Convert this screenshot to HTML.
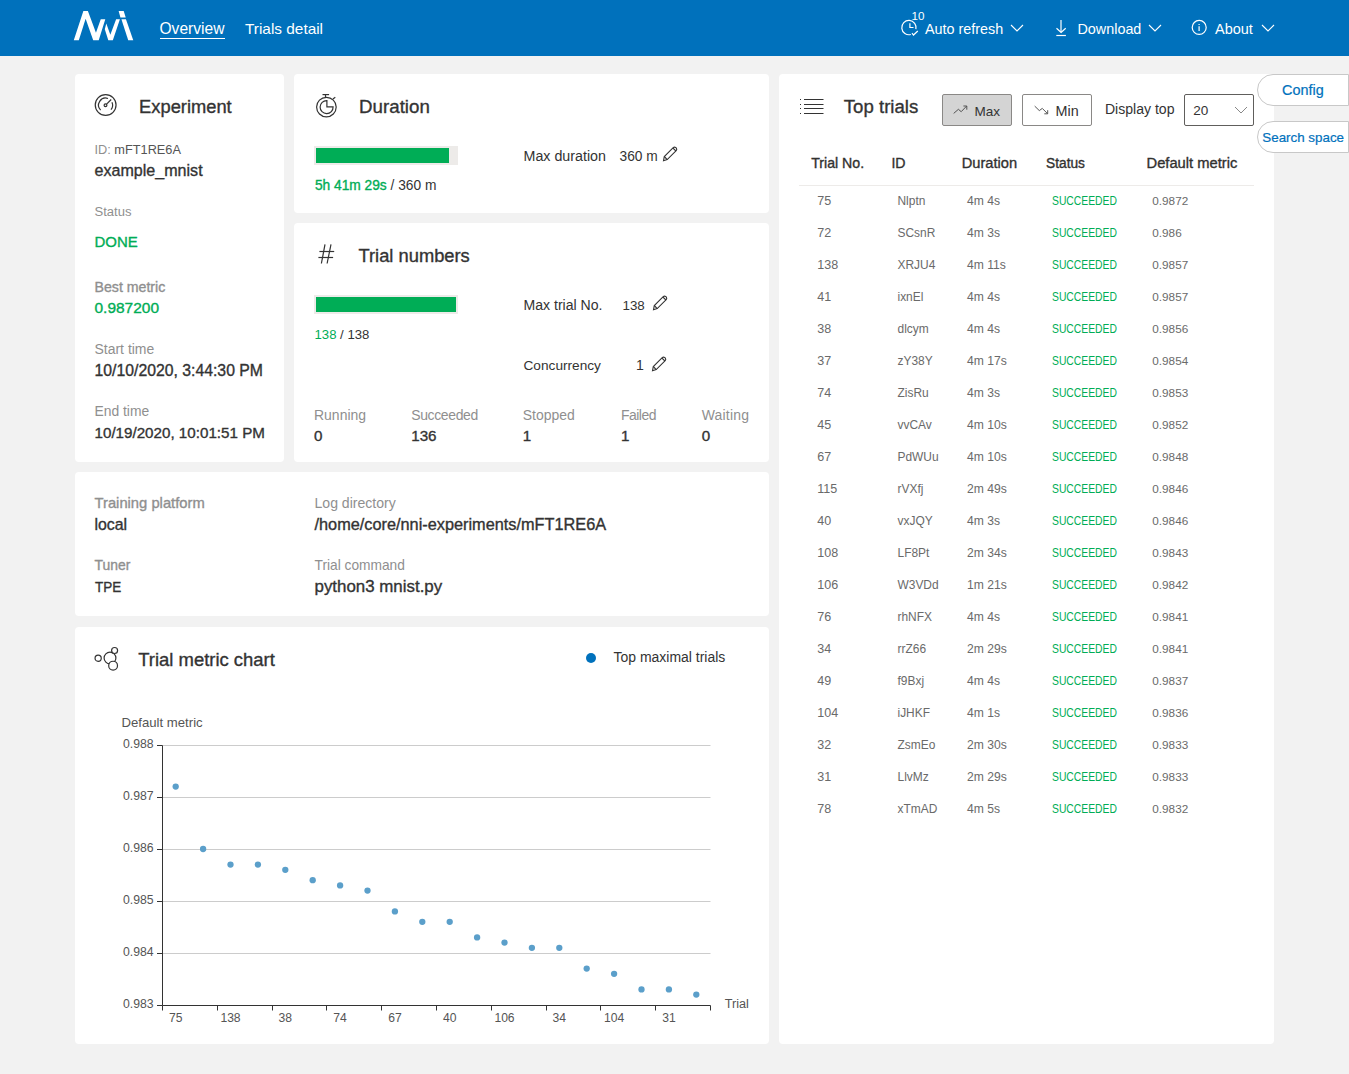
<!DOCTYPE html>
<html><head><meta charset="utf-8"><style>
html,body{margin:0;padding:0;}
body{width:1349px;height:1074px;position:relative;overflow:hidden;background:#f2f2f2;font-family:"Liberation Sans",sans-serif;}
.t{position:absolute;white-space:nowrap;}
svg{overflow:visible}
</style></head><body>
<div style="position:absolute;left:0px;top:0px;width:1349px;height:56px;background:#0071bc"></div>
<svg style="position:absolute;left:70px;top:8px" width="68" height="36" viewBox="0 0 1349 714"><g fill="#fff"><polygon points="75,640 265,60 355,60 515,490 610,225 700,225 570,640 460,640 310,215 175,640"/><polygon points="690,420 720,305 800,530 915,225 990,225 850,640 760,640"/><polygon points="965,60 1065,60 1105,190 1000,190"/><polygon points="1020,225 1110,225 1255,640 1155,640"/></g></svg>
<div class="t" style="left:159.5px;top:21px;font-size:15.58px;line-height:15.58px;color:#fff;">Overview</div>
<div style="position:absolute;left:160px;top:38px;width:65px;height:1px;background:#fff"></div>
<div class="t" style="left:245.0px;top:21px;font-size:15.38px;line-height:15.38px;color:#fff;">Trials detail</div>
<svg style="position:absolute;left:898px;top:6px" width="32" height="32" viewBox="0 0 32 32" fill="none" stroke="#fff" stroke-width="1.2"><path d="M12.8 28.5 A7.15 7.15 0 1 1 17.9 23.2"/><path d="M11.9 17.3 V21.5 H15.5"/><path d="M14 27.1 L15.5 29 L19.8 25"/></svg>
<div class="t" style="left:911.5px;top:10px;font-size:11.64px;line-height:11.64px;color:#fff;">10</div>
<div class="t" style="left:925.0px;top:22px;font-size:14.37px;line-height:14.37px;color:#fff;">Auto refresh</div>
<svg style="position:absolute;left:1008px;top:20px" width="18" height="14" viewBox="0 0 18 14" fill="none" stroke="#fff" stroke-width="1.1"><path d="M3 5 L9 11 L15 5"/></svg>
<svg style="position:absolute;left:1050px;top:14px" width="24" height="24" viewBox="0 0 24 24" fill="none" stroke="#fff" stroke-width="1.2"><path d="M11 6 V18.3"/><path d="M6.5 14.3 L11.1 18.5 L15.7 14.3"/><path d="M6.3 21.5 H15.9"/></svg>
<div class="t" style="left:1077.5px;top:22px;font-size:14.37px;line-height:14.37px;color:#fff;">Download</div>
<svg style="position:absolute;left:1146px;top:20px" width="18" height="14" viewBox="0 0 18 14" fill="none" stroke="#fff" stroke-width="1.1"><path d="M3 5 L9 11 L15 5"/></svg>
<svg style="position:absolute;left:1186px;top:14px" width="26" height="26" viewBox="0 0 26 26" fill="none" stroke="#fff" stroke-width="1.2"><circle cx="13.2" cy="13.45" r="7"/><path d="M13.1 12.3 V16.9"/><path d="M13.1 10 V11" /></svg>
<div class="t" style="left:1215.0px;top:22px;font-size:14.47px;line-height:14.47px;color:#fff;">About</div>
<svg style="position:absolute;left:1259px;top:20px" width="18" height="14" viewBox="0 0 18 14" fill="none" stroke="#fff" stroke-width="1.1"><path d="M3 5 L9 11 L15 5"/></svg>
<div style="position:absolute;left:75px;top:74px;width:209px;height:388px;background:#fff;border-radius:4px"></div>
<div style="position:absolute;left:294px;top:74px;width:475px;height:139px;background:#fff;border-radius:4px"></div>
<div style="position:absolute;left:294px;top:223px;width:475px;height:239px;background:#fff;border-radius:4px"></div>
<div style="position:absolute;left:75px;top:472px;width:694px;height:144px;background:#fff;border-radius:4px"></div>
<div style="position:absolute;left:75px;top:627px;width:694px;height:417px;background:#fff;border-radius:4px"></div>
<div style="position:absolute;left:779px;top:74px;width:495px;height:970px;background:#fff;border-radius:4px"></div>
<svg style="position:absolute;left:90px;top:90px" width="32" height="32" viewBox="0 0 32 32" fill="none" stroke="#333" stroke-width="1.2"><circle cx="15.65" cy="15.05" r="10.4"/><path d="M10.65 20.05 A7 7 0 0 1 17.99 8.52"/><path d="M21.94 12.14 A7 7 0 0 1 20.96 19.6"/><path d="M16.6 14.1 L21.2 9.5"/><circle cx="15.5" cy="15.2" r="1.4"/></svg>
<div class="t" style="left:139.1px;top:98px;font-size:18.32px;line-height:18.32px;color:#333;-webkit-text-stroke:0.35px #333;">Experiment</div>
<div class="t" style="left:94.5px;top:144px;font-size:12.75px;line-height:12.75px;color:#8f8f8f;">ID: <span style="color:#555">mFT1RE6A</span></div>
<div class="t" style="left:94.5px;top:162px;font-size:16.09px;line-height:16.09px;color:#333;-webkit-text-stroke:0.35px #333;">example_mnist</div>
<div class="t" style="left:94.5px;top:205px;font-size:13.05px;line-height:13.05px;color:#8f8f8f;">Status</div>
<div class="t" style="left:94.5px;top:234px;font-size:14.98px;line-height:14.98px;color:#00ad56;-webkit-text-stroke:0.35px #00ad56;">DONE</div>
<div class="t" style="left:94.5px;top:280px;font-size:14.17px;line-height:14.17px;color:#8f8f8f;-webkit-text-stroke:0.35px #8f8f8f;">Best metric</div>
<div class="t" style="left:94.5px;top:300px;font-size:15.48px;line-height:15.48px;color:#00ad56;-webkit-text-stroke:0.35px #00ad56;">0.987200</div>
<div class="t" style="left:94.5px;top:343px;font-size:13.97px;line-height:13.97px;color:#8f8f8f;">Start time</div>
<div class="t" style="left:94.5px;top:363px;font-size:15.79px;line-height:15.79px;color:#333;-webkit-text-stroke:0.35px #333;">10/10/2020, 3:44:30 PM</div>
<div class="t" style="left:94.5px;top:405px;font-size:13.86px;line-height:13.86px;color:#8f8f8f;">End time</div>
<div class="t" style="left:94.5px;top:425px;font-size:15.18px;line-height:15.18px;color:#333;-webkit-text-stroke:0.35px #333;">10/19/2020, 10:01:51 PM</div>
<svg style="position:absolute;left:310px;top:90px" width="32" height="32" viewBox="0 0 32 32" fill="none" stroke="#333" stroke-width="1.2"><circle cx="16.4" cy="17.1" r="9.8"/><path d="M15.5 4.8 V7.2"/><path d="M12.5 4.6 H19.1"/><path d="M22.9 8.9 L25.3 7.2"/><path d="M16.9 10.6 A6.5 6.5 0 1 0 23.1 16.8 H16.9 Z"/></svg>
<div class="t" style="left:359.1px;top:98px;font-size:18.72px;line-height:18.72px;color:#333;-webkit-text-stroke:0.35px #333;">Duration</div>
<div style="position:absolute;left:314px;top:146px;width:144px;height:19px;background:#edebe9"></div>
<div style="position:absolute;left:316px;top:148px;width:133px;height:15px;background:#00ad56"></div>
<div class="t" style="left:314.9px;top:179px;font-size:13.76px;line-height:13.76px;color:#333;"><span style="color:#00ad56;-webkit-text-stroke:0.35px #00ad56">5h 41m 29s</span> / 360 m</div>
<div class="t" style="left:523.5px;top:149px;font-size:14.27px;line-height:14.27px;color:#333;">Max duration</div>
<div class="t" style="left:619.5px;top:150px;font-size:13.76px;line-height:13.76px;color:#333;">360 m</div>
<svg style="position:absolute;left:660px;top:144px" width="20" height="20" viewBox="0 0 20 20" fill="none" stroke="#333" stroke-width="1.1"><path d="M3.5 16.8 L4.3 12.5 L13.2 3.6 Q14.5 2.6 15.8 3.6 L16.4 4.2 Q17.2 5.5 16.2 6.6 L7.2 15.6 Z"/><path d="M4.3 12.5 L7.2 15.6"/><path d="M13 4.1 L15.9 7"/></svg>
<svg style="position:absolute;left:312px;top:240px" width="28" height="28" viewBox="0 0 28 28" fill="none" stroke="#333" stroke-width="1.2"><path d="M13 4.4 L9.4 23.5"/><path d="M19 4.4 L15.1 23.5"/><path d="M7.4 11.5 H22.2"/><path d="M6.4 17.5 H21.1"/></svg>
<div class="t" style="left:358.5px;top:247px;font-size:18.32px;line-height:18.32px;color:#333;-webkit-text-stroke:0.35px #333;">Trial numbers</div>
<div style="position:absolute;left:314px;top:295px;width:144px;height:19px;background:#edebe9"></div>
<div style="position:absolute;left:316px;top:297px;width:140px;height:15px;background:#00ad56"></div>
<div class="t" style="left:314.5px;top:328px;font-size:13.16px;line-height:13.16px;color:#333;"><span style="color:#00ad56">138</span> / 138</div>
<div class="t" style="left:523.5px;top:298px;font-size:14.07px;line-height:14.07px;color:#333;">Max trial No.</div>
<div class="t" style="left:622.5px;top:299px;font-size:13.36px;line-height:13.36px;color:#333;">138</div>
<svg style="position:absolute;left:650px;top:293px" width="20" height="20" viewBox="0 0 20 20" fill="none" stroke="#333" stroke-width="1.1"><path d="M3.5 16.8 L4.3 12.5 L13.2 3.6 Q14.5 2.6 15.8 3.6 L16.4 4.2 Q17.2 5.5 16.2 6.6 L7.2 15.6 Z"/><path d="M4.3 12.5 L7.2 15.6"/><path d="M13 4.1 L15.9 7"/></svg>
<div class="t" style="left:523.5px;top:359px;font-size:13.66px;line-height:13.66px;color:#333;">Concurrency</div>
<div class="t" style="left:636.0px;top:358px;font-size:14.07px;line-height:14.07px;color:#333;">1</div>
<svg style="position:absolute;left:649px;top:354px" width="20" height="20" viewBox="0 0 20 20" fill="none" stroke="#333" stroke-width="1.1"><path d="M3.5 16.8 L4.3 12.5 L13.2 3.6 Q14.5 2.6 15.8 3.6 L16.4 4.2 Q17.2 5.5 16.2 6.6 L7.2 15.6 Z"/><path d="M4.3 12.5 L7.2 15.6"/><path d="M13 4.1 L15.9 7"/></svg>
<div class="t" style="left:314.0px;top:409px;font-size:13.97px;line-height:13.97px;color:#8f8f8f;letter-spacing:0px;">Running</div>
<div class="t" style="left:314.0px;top:428px;font-size:15.18px;line-height:15.18px;color:#333;-webkit-text-stroke:0.35px #333;">0</div>
<div class="t" style="left:411.2px;top:409px;font-size:13.97px;line-height:13.97px;color:#8f8f8f;letter-spacing:-0.35px;">Succeeded</div>
<div class="t" style="left:411.2px;top:428px;font-size:15.18px;line-height:15.18px;color:#333;-webkit-text-stroke:0.35px #333;">136</div>
<div class="t" style="left:522.7px;top:409px;font-size:13.97px;line-height:13.97px;color:#8f8f8f;letter-spacing:0px;">Stopped</div>
<div class="t" style="left:522.7px;top:428px;font-size:15.18px;line-height:15.18px;color:#333;-webkit-text-stroke:0.35px #333;">1</div>
<div class="t" style="left:620.9px;top:409px;font-size:13.97px;line-height:13.97px;color:#8f8f8f;letter-spacing:-0.5px;">Failed</div>
<div class="t" style="left:620.9px;top:428px;font-size:15.18px;line-height:15.18px;color:#333;-webkit-text-stroke:0.35px #333;">1</div>
<div class="t" style="left:701.7px;top:409px;font-size:13.97px;line-height:13.97px;color:#8f8f8f;letter-spacing:0.2px;">Waiting</div>
<div class="t" style="left:701.7px;top:428px;font-size:15.18px;line-height:15.18px;color:#333;-webkit-text-stroke:0.35px #333;">0</div>
<div class="t" style="left:94.5px;top:496px;font-size:14.78px;line-height:14.78px;color:#8f8f8f;-webkit-text-stroke:0.35px #8f8f8f;">Training platform</div>
<div class="t" style="left:94.5px;top:517px;font-size:15.89px;line-height:15.89px;color:#333;-webkit-text-stroke:0.35px #333;">local</div>
<div class="t" style="left:94.5px;top:559px;font-size:13.92px;line-height:13.92px;color:#8f8f8f;-webkit-text-stroke:0.35px #8f8f8f;">Tuner</div>
<div class="t" style="left:94.5px;top:579px;font-size:15.18px;line-height:15.18px;color:#333;-webkit-text-stroke:0.35px #333;transform:scaleX(0.89);transform-origin:0 0;">TPE</div>
<div class="t" style="left:314.5px;top:496px;font-size:14.07px;line-height:14.07px;color:#8f8f8f;">Log directory</div>
<div class="t" style="left:314.5px;top:516px;font-size:16.31px;line-height:16.31px;color:#333;-webkit-text-stroke:0.35px #333;">/home/core/nni-experiments/mFT1RE6A</div>
<div class="t" style="left:314.5px;top:559px;font-size:13.76px;line-height:13.76px;color:#8f8f8f;">Trial command</div>
<div class="t" style="left:314.5px;top:579px;font-size:16.9px;line-height:16.9px;color:#333;-webkit-text-stroke:0.35px #333;">python3 mnist.py</div>
<svg style="position:absolute;left:92px;top:644px" width="30" height="30" viewBox="0 0 30 30" fill="none" stroke="#333" stroke-width="1.2"><circle cx="6.15" cy="14.2" r="3.1"/><circle cx="18" cy="14" r="5.9"/><circle cx="22.6" cy="6.5" r="3.0" fill="#fff"/><circle cx="21.1" cy="21.65" r="4.4" fill="#fff"/></svg>
<div class="t" style="left:138.2px;top:651px;font-size:18.47px;line-height:18.47px;color:#333;-webkit-text-stroke:0.35px #333;">Trial metric chart</div>
<div style="position:absolute;left:586px;top:653px;width:10px;height:10px;background:#0071bc;border-radius:50%"></div>
<div class="t" style="left:613.5px;top:651px;font-size:13.97px;line-height:13.97px;color:#333;">Top maximal trials</div>
<svg style="position:absolute;left:0;top:0" width="1349" height="1074" viewBox="0 0 1349 1074"><line x1="162.5" y1="953.5" x2="710.5" y2="953.5" stroke="#ccc" stroke-width="1"/><line x1="162.5" y1="901.5" x2="710.5" y2="901.5" stroke="#ccc" stroke-width="1"/><line x1="162.5" y1="849.5" x2="710.5" y2="849.5" stroke="#ccc" stroke-width="1"/><line x1="162.5" y1="797.5" x2="710.5" y2="797.5" stroke="#ccc" stroke-width="1"/><line x1="162.5" y1="745.5" x2="710.5" y2="745.5" stroke="#ccc" stroke-width="1"/><line x1="157" y1="1005.5" x2="162.5" y2="1005.5" stroke="#333" stroke-width="1"/><line x1="157" y1="953.5" x2="162.5" y2="953.5" stroke="#333" stroke-width="1"/><line x1="157" y1="901.5" x2="162.5" y2="901.5" stroke="#333" stroke-width="1"/><line x1="157" y1="849.5" x2="162.5" y2="849.5" stroke="#333" stroke-width="1"/><line x1="157" y1="797.5" x2="162.5" y2="797.5" stroke="#333" stroke-width="1"/><line x1="157" y1="745.5" x2="162.5" y2="745.5" stroke="#333" stroke-width="1"/><line x1="162.5" y1="745.5" x2="162.5" y2="1005.5" stroke="#333" stroke-width="1"/><line x1="162.5" y1="1005.5" x2="710.5" y2="1005.5" stroke="#333" stroke-width="1"/><line x1="162.5" y1="1005.5" x2="162.5" y2="1010.5" stroke="#333" stroke-width="1"/><line x1="217.5" y1="1005.5" x2="217.5" y2="1010.5" stroke="#333" stroke-width="1"/><line x1="272.5" y1="1005.5" x2="272.5" y2="1010.5" stroke="#333" stroke-width="1"/><line x1="326.5" y1="1005.5" x2="326.5" y2="1010.5" stroke="#333" stroke-width="1"/><line x1="381.5" y1="1005.5" x2="381.5" y2="1010.5" stroke="#333" stroke-width="1"/><line x1="436.5" y1="1005.5" x2="436.5" y2="1010.5" stroke="#333" stroke-width="1"/><line x1="491.5" y1="1005.5" x2="491.5" y2="1010.5" stroke="#333" stroke-width="1"/><line x1="546.5" y1="1005.5" x2="546.5" y2="1010.5" stroke="#333" stroke-width="1"/><line x1="600.5" y1="1005.5" x2="600.5" y2="1010.5" stroke="#333" stroke-width="1"/><line x1="655.5" y1="1005.5" x2="655.5" y2="1010.5" stroke="#333" stroke-width="1"/><line x1="710.5" y1="1005.5" x2="710.5" y2="1010.5" stroke="#333" stroke-width="1"/><circle cx="175.70" cy="786.60" r="3.15" fill="#5b9fca"/><circle cx="203.10" cy="849.00" r="3.15" fill="#5b9fca"/><circle cx="230.50" cy="864.60" r="3.15" fill="#5b9fca"/><circle cx="257.90" cy="864.60" r="3.15" fill="#5b9fca"/><circle cx="285.30" cy="869.80" r="3.15" fill="#5b9fca"/><circle cx="312.70" cy="880.20" r="3.15" fill="#5b9fca"/><circle cx="340.10" cy="885.40" r="3.15" fill="#5b9fca"/><circle cx="367.50" cy="890.60" r="3.15" fill="#5b9fca"/><circle cx="394.90" cy="911.40" r="3.15" fill="#5b9fca"/><circle cx="422.30" cy="921.80" r="3.15" fill="#5b9fca"/><circle cx="449.70" cy="921.80" r="3.15" fill="#5b9fca"/><circle cx="477.10" cy="937.40" r="3.15" fill="#5b9fca"/><circle cx="504.50" cy="942.60" r="3.15" fill="#5b9fca"/><circle cx="531.90" cy="947.80" r="3.15" fill="#5b9fca"/><circle cx="559.30" cy="947.80" r="3.15" fill="#5b9fca"/><circle cx="586.70" cy="968.60" r="3.15" fill="#5b9fca"/><circle cx="614.10" cy="973.80" r="3.15" fill="#5b9fca"/><circle cx="641.50" cy="989.40" r="3.15" fill="#5b9fca"/><circle cx="668.90" cy="989.40" r="3.15" fill="#5b9fca"/><circle cx="696.30" cy="994.60" r="3.15" fill="#5b9fca"/></svg>
<div class="t" style="left:121.5px;top:716px;font-size:13.16px;line-height:13.16px;color:#555;">Default metric</div>
<div class="t" style="left:123.0px;top:998px;font-size:12.25px;line-height:12.25px;color:#555;">0.983</div>
<div class="t" style="left:123.0px;top:946px;font-size:12.25px;line-height:12.25px;color:#555;">0.984</div>
<div class="t" style="left:123.0px;top:894px;font-size:12.25px;line-height:12.25px;color:#555;">0.985</div>
<div class="t" style="left:123.0px;top:842px;font-size:12.25px;line-height:12.25px;color:#555;">0.986</div>
<div class="t" style="left:123.0px;top:790px;font-size:12.25px;line-height:12.25px;color:#555;">0.987</div>
<div class="t" style="left:123.0px;top:738px;font-size:12.25px;line-height:12.25px;color:#555;">0.988</div>
<div class="t" style="left:175.7px;top:1012px;font-size:12.14px;line-height:12.14px;color:#555;transform:translateX(-50%);">75</div>
<div class="t" style="left:230.5px;top:1012px;font-size:12.14px;line-height:12.14px;color:#555;transform:translateX(-50%);">138</div>
<div class="t" style="left:285.3px;top:1012px;font-size:12.14px;line-height:12.14px;color:#555;transform:translateX(-50%);">38</div>
<div class="t" style="left:340.1px;top:1012px;font-size:12.14px;line-height:12.14px;color:#555;transform:translateX(-50%);">74</div>
<div class="t" style="left:394.9px;top:1012px;font-size:12.14px;line-height:12.14px;color:#555;transform:translateX(-50%);">67</div>
<div class="t" style="left:449.7px;top:1012px;font-size:12.14px;line-height:12.14px;color:#555;transform:translateX(-50%);">40</div>
<div class="t" style="left:504.5px;top:1012px;font-size:12.14px;line-height:12.14px;color:#555;transform:translateX(-50%);">106</div>
<div class="t" style="left:559.3px;top:1012px;font-size:12.14px;line-height:12.14px;color:#555;transform:translateX(-50%);">34</div>
<div class="t" style="left:614.0999999999999px;top:1012px;font-size:12.14px;line-height:12.14px;color:#555;transform:translateX(-50%);">104</div>
<div class="t" style="left:668.9px;top:1012px;font-size:12.14px;line-height:12.14px;color:#555;transform:translateX(-50%);">31</div>
<div class="t" style="left:724.8px;top:998px;font-size:12.65px;line-height:12.65px;color:#555;">Trial</div>
<svg style="position:absolute;left:795px;top:92px" width="34" height="28" viewBox="0 0 34 28" fill="none" stroke="#333" stroke-width="1"><path d="M9 7.5 H28.5 M9 12.5 H28.5 M9 16.5 H28.5 M9 21.5 H28.5"/><path d="M5 7.5 H6 M5 12.5 H6 M5 16.5 H6 M5 21.5 H6"/></svg>
<div class="t" style="left:843.8px;top:98px;font-size:18.62px;line-height:18.62px;color:#333;-webkit-text-stroke:0.35px #333;">Top trials</div>
<div style="position:absolute;left:942px;top:94px;width:70px;height:32px;background:#d4d4d4;border:1px solid #8a8886;border-radius:2px;box-sizing:border-box"></div>
<svg style="position:absolute;left:950px;top:100px" width="22" height="20" viewBox="0 0 22 20" fill="none" stroke="#444" stroke-width="0.9"><path d="M3.7 13.4 L8.4 9.3 L11.2 11.7 L16.4 6.3"/><path d="M13.4 6 H16.8 V9.7"/></svg>
<div class="t" style="left:974.5px;top:105px;font-size:13.56px;line-height:13.56px;color:#333;">Max</div>
<div style="position:absolute;left:1022px;top:94px;width:70px;height:32px;background:#fff;border:1px solid #8a8886;border-radius:2px;box-sizing:border-box"></div>
<svg style="position:absolute;left:1030px;top:100px" width="22" height="20" viewBox="0 0 22 20" fill="none" stroke="#444" stroke-width="0.9"><path d="M4.7 6.1 L9.3 10.6 L12.3 8.4 L17.3 13.4"/><path d="M17.7 10.2 V13.8 H14.3"/></svg>
<div class="t" style="left:1055.5px;top:104px;font-size:14.37px;line-height:14.37px;color:#333;">Min</div>
<div class="t" style="left:1104.9px;top:102px;font-size:14.07px;line-height:14.07px;color:#333;">Display top</div>
<div style="position:absolute;left:1184px;top:94px;width:70px;height:32px;background:#fff;border:1px solid #605e5c;border-radius:2px;box-sizing:border-box"></div>
<div class="t" style="left:1193.3px;top:104px;font-size:13.56px;line-height:13.56px;color:#333;">20</div>
<svg style="position:absolute;left:1232px;top:104px" width="18" height="12" viewBox="0 0 18 12" fill="none" stroke="#7a7a7a" stroke-width="0.9"><path d="M3 3 L9 9 L15 3"/></svg>
<div style="position:absolute;left:1257px;top:74px;width:92px;height:32px;background:#fff;border:1px solid #c8c8c8;border-radius:16px 0 0 16px;box-sizing:border-box"></div>
<div class="t" style="left:1282.1px;top:83px;font-size:14.42px;line-height:14.42px;color:#0071bc;-webkit-text-stroke:0.2px #0071bc;">Config</div>
<div style="position:absolute;left:1257px;top:121px;width:92px;height:32px;background:#fff;border:1px solid #c8c8c8;border-radius:16px 0 0 16px;box-sizing:border-box"></div>
<div class="t" style="left:1262.3px;top:131px;font-size:13.36px;line-height:13.36px;color:#0071bc;-webkit-text-stroke:0.2px #0071bc;">Search space</div>
<div class="t" style="left:811.2px;top:156px;font-size:14.17px;line-height:14.17px;color:#323130;-webkit-text-stroke:0.35px #323130;">Trial No.</div>
<div class="t" style="left:891.4px;top:156px;font-size:14.17px;line-height:14.17px;color:#323130;-webkit-text-stroke:0.35px #323130;">ID</div>
<div class="t" style="left:961.7px;top:156px;font-size:14.67px;line-height:14.67px;color:#323130;-webkit-text-stroke:0.35px #323130;">Duration</div>
<div class="t" style="left:1046.1px;top:157px;font-size:13.71px;line-height:13.71px;color:#323130;-webkit-text-stroke:0.35px #323130;">Status</div>
<div class="t" style="left:1146.5px;top:156px;font-size:14.73px;line-height:14.73px;color:#323130;-webkit-text-stroke:0.35px #323130;">Default metric</div>
<div style="position:absolute;left:799px;top:185px;width:455px;height:1px;background:#edebe9"></div>
<div class="t" style="left:817.3px;top:195px;font-size:12.55px;line-height:12.55px;color:#6a6a6a;">75</div>
<div class="t" style="left:897.5px;top:196px;font-size:11.94px;line-height:11.94px;color:#6a6a6a;">Nlptn</div>
<div class="t" style="left:967.0px;top:195px;font-size:12.14px;line-height:12.14px;color:#6a6a6a;">4m 4s</div>
<div class="t" style="left:1052.3px;top:195px;font-size:12.55px;line-height:12.55px;color:#00ad56;transform:scaleX(0.824);transform-origin:0 0;">SUCCEEDED</div>
<div class="t" style="left:1152.3px;top:195px;font-size:11.74px;line-height:11.74px;color:#6a6a6a;">0.9872</div>
<div class="t" style="left:817.3px;top:227px;font-size:12.55px;line-height:12.55px;color:#6a6a6a;">72</div>
<div class="t" style="left:897.5px;top:228px;font-size:11.94px;line-height:11.94px;color:#6a6a6a;">SCsnR</div>
<div class="t" style="left:967.0px;top:227px;font-size:12.14px;line-height:12.14px;color:#6a6a6a;">4m 3s</div>
<div class="t" style="left:1052.3px;top:227px;font-size:12.55px;line-height:12.55px;color:#00ad56;transform:scaleX(0.824);transform-origin:0 0;">SUCCEEDED</div>
<div class="t" style="left:1152.3px;top:227px;font-size:11.74px;line-height:11.74px;color:#6a6a6a;">0.986</div>
<div class="t" style="left:817.3px;top:259px;font-size:12.55px;line-height:12.55px;color:#6a6a6a;">138</div>
<div class="t" style="left:897.5px;top:260px;font-size:11.94px;line-height:11.94px;color:#6a6a6a;">XRJU4</div>
<div class="t" style="left:967.0px;top:259px;font-size:12.14px;line-height:12.14px;color:#6a6a6a;">4m 11s</div>
<div class="t" style="left:1052.3px;top:259px;font-size:12.55px;line-height:12.55px;color:#00ad56;transform:scaleX(0.824);transform-origin:0 0;">SUCCEEDED</div>
<div class="t" style="left:1152.3px;top:259px;font-size:11.74px;line-height:11.74px;color:#6a6a6a;">0.9857</div>
<div class="t" style="left:817.3px;top:291px;font-size:12.55px;line-height:12.55px;color:#6a6a6a;">41</div>
<div class="t" style="left:897.5px;top:292px;font-size:11.94px;line-height:11.94px;color:#6a6a6a;">ixnEl</div>
<div class="t" style="left:967.0px;top:291px;font-size:12.14px;line-height:12.14px;color:#6a6a6a;">4m 4s</div>
<div class="t" style="left:1052.3px;top:291px;font-size:12.55px;line-height:12.55px;color:#00ad56;transform:scaleX(0.824);transform-origin:0 0;">SUCCEEDED</div>
<div class="t" style="left:1152.3px;top:291px;font-size:11.74px;line-height:11.74px;color:#6a6a6a;">0.9857</div>
<div class="t" style="left:817.3px;top:323px;font-size:12.55px;line-height:12.55px;color:#6a6a6a;">38</div>
<div class="t" style="left:897.5px;top:324px;font-size:11.94px;line-height:11.94px;color:#6a6a6a;">dlcym</div>
<div class="t" style="left:967.0px;top:323px;font-size:12.14px;line-height:12.14px;color:#6a6a6a;">4m 4s</div>
<div class="t" style="left:1052.3px;top:323px;font-size:12.55px;line-height:12.55px;color:#00ad56;transform:scaleX(0.824);transform-origin:0 0;">SUCCEEDED</div>
<div class="t" style="left:1152.3px;top:323px;font-size:11.74px;line-height:11.74px;color:#6a6a6a;">0.9856</div>
<div class="t" style="left:817.3px;top:355px;font-size:12.55px;line-height:12.55px;color:#6a6a6a;">37</div>
<div class="t" style="left:897.5px;top:356px;font-size:11.94px;line-height:11.94px;color:#6a6a6a;">zY38Y</div>
<div class="t" style="left:967.0px;top:355px;font-size:12.14px;line-height:12.14px;color:#6a6a6a;">4m 17s</div>
<div class="t" style="left:1052.3px;top:355px;font-size:12.55px;line-height:12.55px;color:#00ad56;transform:scaleX(0.824);transform-origin:0 0;">SUCCEEDED</div>
<div class="t" style="left:1152.3px;top:355px;font-size:11.74px;line-height:11.74px;color:#6a6a6a;">0.9854</div>
<div class="t" style="left:817.3px;top:387px;font-size:12.55px;line-height:12.55px;color:#6a6a6a;">74</div>
<div class="t" style="left:897.5px;top:388px;font-size:11.94px;line-height:11.94px;color:#6a6a6a;">ZisRu</div>
<div class="t" style="left:967.0px;top:387px;font-size:12.14px;line-height:12.14px;color:#6a6a6a;">4m 3s</div>
<div class="t" style="left:1052.3px;top:387px;font-size:12.55px;line-height:12.55px;color:#00ad56;transform:scaleX(0.824);transform-origin:0 0;">SUCCEEDED</div>
<div class="t" style="left:1152.3px;top:387px;font-size:11.74px;line-height:11.74px;color:#6a6a6a;">0.9853</div>
<div class="t" style="left:817.3px;top:419px;font-size:12.55px;line-height:12.55px;color:#6a6a6a;">45</div>
<div class="t" style="left:897.5px;top:420px;font-size:11.94px;line-height:11.94px;color:#6a6a6a;">vvCAv</div>
<div class="t" style="left:967.0px;top:419px;font-size:12.14px;line-height:12.14px;color:#6a6a6a;">4m 10s</div>
<div class="t" style="left:1052.3px;top:419px;font-size:12.55px;line-height:12.55px;color:#00ad56;transform:scaleX(0.824);transform-origin:0 0;">SUCCEEDED</div>
<div class="t" style="left:1152.3px;top:419px;font-size:11.74px;line-height:11.74px;color:#6a6a6a;">0.9852</div>
<div class="t" style="left:817.3px;top:451px;font-size:12.55px;line-height:12.55px;color:#6a6a6a;">67</div>
<div class="t" style="left:897.5px;top:452px;font-size:11.94px;line-height:11.94px;color:#6a6a6a;">PdWUu</div>
<div class="t" style="left:967.0px;top:451px;font-size:12.14px;line-height:12.14px;color:#6a6a6a;">4m 10s</div>
<div class="t" style="left:1052.3px;top:451px;font-size:12.55px;line-height:12.55px;color:#00ad56;transform:scaleX(0.824);transform-origin:0 0;">SUCCEEDED</div>
<div class="t" style="left:1152.3px;top:451px;font-size:11.74px;line-height:11.74px;color:#6a6a6a;">0.9848</div>
<div class="t" style="left:817.3px;top:483px;font-size:12.55px;line-height:12.55px;color:#6a6a6a;">115</div>
<div class="t" style="left:897.5px;top:484px;font-size:11.94px;line-height:11.94px;color:#6a6a6a;">rVXfj</div>
<div class="t" style="left:967.0px;top:483px;font-size:12.14px;line-height:12.14px;color:#6a6a6a;">2m 49s</div>
<div class="t" style="left:1052.3px;top:483px;font-size:12.55px;line-height:12.55px;color:#00ad56;transform:scaleX(0.824);transform-origin:0 0;">SUCCEEDED</div>
<div class="t" style="left:1152.3px;top:483px;font-size:11.74px;line-height:11.74px;color:#6a6a6a;">0.9846</div>
<div class="t" style="left:817.3px;top:515px;font-size:12.55px;line-height:12.55px;color:#6a6a6a;">40</div>
<div class="t" style="left:897.5px;top:516px;font-size:11.94px;line-height:11.94px;color:#6a6a6a;">vxJQY</div>
<div class="t" style="left:967.0px;top:515px;font-size:12.14px;line-height:12.14px;color:#6a6a6a;">4m 3s</div>
<div class="t" style="left:1052.3px;top:515px;font-size:12.55px;line-height:12.55px;color:#00ad56;transform:scaleX(0.824);transform-origin:0 0;">SUCCEEDED</div>
<div class="t" style="left:1152.3px;top:515px;font-size:11.74px;line-height:11.74px;color:#6a6a6a;">0.9846</div>
<div class="t" style="left:817.3px;top:547px;font-size:12.55px;line-height:12.55px;color:#6a6a6a;">108</div>
<div class="t" style="left:897.5px;top:548px;font-size:11.94px;line-height:11.94px;color:#6a6a6a;">LF8Pt</div>
<div class="t" style="left:967.0px;top:547px;font-size:12.14px;line-height:12.14px;color:#6a6a6a;">2m 34s</div>
<div class="t" style="left:1052.3px;top:547px;font-size:12.55px;line-height:12.55px;color:#00ad56;transform:scaleX(0.824);transform-origin:0 0;">SUCCEEDED</div>
<div class="t" style="left:1152.3px;top:547px;font-size:11.74px;line-height:11.74px;color:#6a6a6a;">0.9843</div>
<div class="t" style="left:817.3px;top:579px;font-size:12.55px;line-height:12.55px;color:#6a6a6a;">106</div>
<div class="t" style="left:897.5px;top:580px;font-size:11.94px;line-height:11.94px;color:#6a6a6a;">W3VDd</div>
<div class="t" style="left:967.0px;top:579px;font-size:12.14px;line-height:12.14px;color:#6a6a6a;">1m 21s</div>
<div class="t" style="left:1052.3px;top:579px;font-size:12.55px;line-height:12.55px;color:#00ad56;transform:scaleX(0.824);transform-origin:0 0;">SUCCEEDED</div>
<div class="t" style="left:1152.3px;top:579px;font-size:11.74px;line-height:11.74px;color:#6a6a6a;">0.9842</div>
<div class="t" style="left:817.3px;top:611px;font-size:12.55px;line-height:12.55px;color:#6a6a6a;">76</div>
<div class="t" style="left:897.5px;top:612px;font-size:11.94px;line-height:11.94px;color:#6a6a6a;">rhNFX</div>
<div class="t" style="left:967.0px;top:611px;font-size:12.14px;line-height:12.14px;color:#6a6a6a;">4m 4s</div>
<div class="t" style="left:1052.3px;top:611px;font-size:12.55px;line-height:12.55px;color:#00ad56;transform:scaleX(0.824);transform-origin:0 0;">SUCCEEDED</div>
<div class="t" style="left:1152.3px;top:611px;font-size:11.74px;line-height:11.74px;color:#6a6a6a;">0.9841</div>
<div class="t" style="left:817.3px;top:643px;font-size:12.55px;line-height:12.55px;color:#6a6a6a;">34</div>
<div class="t" style="left:897.5px;top:644px;font-size:11.94px;line-height:11.94px;color:#6a6a6a;">rrZ66</div>
<div class="t" style="left:967.0px;top:643px;font-size:12.14px;line-height:12.14px;color:#6a6a6a;">2m 29s</div>
<div class="t" style="left:1052.3px;top:643px;font-size:12.55px;line-height:12.55px;color:#00ad56;transform:scaleX(0.824);transform-origin:0 0;">SUCCEEDED</div>
<div class="t" style="left:1152.3px;top:643px;font-size:11.74px;line-height:11.74px;color:#6a6a6a;">0.9841</div>
<div class="t" style="left:817.3px;top:675px;font-size:12.55px;line-height:12.55px;color:#6a6a6a;">49</div>
<div class="t" style="left:897.5px;top:676px;font-size:11.94px;line-height:11.94px;color:#6a6a6a;">f9Bxj</div>
<div class="t" style="left:967.0px;top:675px;font-size:12.14px;line-height:12.14px;color:#6a6a6a;">4m 4s</div>
<div class="t" style="left:1052.3px;top:675px;font-size:12.55px;line-height:12.55px;color:#00ad56;transform:scaleX(0.824);transform-origin:0 0;">SUCCEEDED</div>
<div class="t" style="left:1152.3px;top:675px;font-size:11.74px;line-height:11.74px;color:#6a6a6a;">0.9837</div>
<div class="t" style="left:817.3px;top:707px;font-size:12.55px;line-height:12.55px;color:#6a6a6a;">104</div>
<div class="t" style="left:897.5px;top:708px;font-size:11.94px;line-height:11.94px;color:#6a6a6a;">iJHKF</div>
<div class="t" style="left:967.0px;top:707px;font-size:12.14px;line-height:12.14px;color:#6a6a6a;">4m 1s</div>
<div class="t" style="left:1052.3px;top:707px;font-size:12.55px;line-height:12.55px;color:#00ad56;transform:scaleX(0.824);transform-origin:0 0;">SUCCEEDED</div>
<div class="t" style="left:1152.3px;top:707px;font-size:11.74px;line-height:11.74px;color:#6a6a6a;">0.9836</div>
<div class="t" style="left:817.3px;top:739px;font-size:12.55px;line-height:12.55px;color:#6a6a6a;">32</div>
<div class="t" style="left:897.5px;top:740px;font-size:11.94px;line-height:11.94px;color:#6a6a6a;">ZsmEo</div>
<div class="t" style="left:967.0px;top:739px;font-size:12.14px;line-height:12.14px;color:#6a6a6a;">2m 30s</div>
<div class="t" style="left:1052.3px;top:739px;font-size:12.55px;line-height:12.55px;color:#00ad56;transform:scaleX(0.824);transform-origin:0 0;">SUCCEEDED</div>
<div class="t" style="left:1152.3px;top:739px;font-size:11.74px;line-height:11.74px;color:#6a6a6a;">0.9833</div>
<div class="t" style="left:817.3px;top:771px;font-size:12.55px;line-height:12.55px;color:#6a6a6a;">31</div>
<div class="t" style="left:897.5px;top:772px;font-size:11.94px;line-height:11.94px;color:#6a6a6a;">LlvMz</div>
<div class="t" style="left:967.0px;top:771px;font-size:12.14px;line-height:12.14px;color:#6a6a6a;">2m 29s</div>
<div class="t" style="left:1052.3px;top:771px;font-size:12.55px;line-height:12.55px;color:#00ad56;transform:scaleX(0.824);transform-origin:0 0;">SUCCEEDED</div>
<div class="t" style="left:1152.3px;top:771px;font-size:11.74px;line-height:11.74px;color:#6a6a6a;">0.9833</div>
<div class="t" style="left:817.3px;top:803px;font-size:12.55px;line-height:12.55px;color:#6a6a6a;">78</div>
<div class="t" style="left:897.5px;top:804px;font-size:11.94px;line-height:11.94px;color:#6a6a6a;">xTmAD</div>
<div class="t" style="left:967.0px;top:803px;font-size:12.14px;line-height:12.14px;color:#6a6a6a;">4m 5s</div>
<div class="t" style="left:1052.3px;top:803px;font-size:12.55px;line-height:12.55px;color:#00ad56;transform:scaleX(0.824);transform-origin:0 0;">SUCCEEDED</div>
<div class="t" style="left:1152.3px;top:803px;font-size:11.74px;line-height:11.74px;color:#6a6a6a;">0.9832</div>
</body></html>
